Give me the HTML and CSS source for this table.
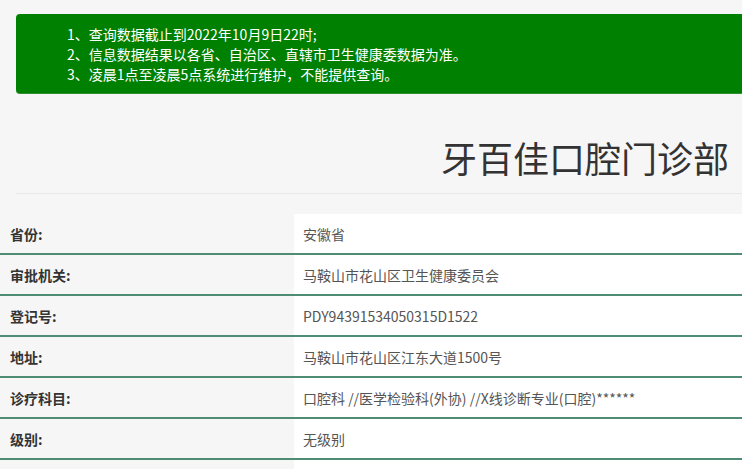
FILE: index.html
```html
<!DOCTYPE html>
<html lang="zh-CN">
<head>
<meta charset="utf-8">
<title>牙百佳口腔门诊部</title>
<link rel="stylesheet" href="styles.css">
</head>
<body>
<div class="top">
  <div class="notice">
    <p>1、查询数据截止到2022年10月9日22时;</p>
    <p>2、信息数据结果以各省、自治区、直辖市卫生健康委数据为准。</p>
    <p>3、凌晨1点至凌晨5点系统进行维护，不能提供查询。</p>
  </div>
  <h1 class="title">牙百佳口腔门诊部</h1>
</div>
<div class="info">
  <div class="row"><div class="label">省份:</div><div class="value">安徽省</div></div>
  <div class="row"><div class="label">审批机关:</div><div class="value">马鞍山市花山区卫生健康委员会</div></div>
  <div class="row"><div class="label">登记号:</div><div class="value">PDY94391534050315D1522</div></div>
  <div class="row"><div class="label">地址:</div><div class="value">马鞍山市花山区江东大道1500号</div></div>
  <div class="row"><div class="label">诊疗科目:</div><div class="value">口腔科 //医学检验科(外协) //X线诊断专业(口腔)******</div></div>
  <div class="row"><div class="label">级别:</div><div class="value">无级别</div></div>
  <div class="row"><div class="label"></div><div class="value"></div></div>
</div>
</body>
</html>
```

FILE: styles.css
```css
html {
  overflow: hidden;
}
body {
  margin: 0;
  background: #f6f6f6;
  font-family: "Noto Sans CJK SC", "Microsoft YaHei", sans-serif;
  color: #333;
}
.top {
  padding-left: 16px;
}
.notice {
  margin: 14px -10px 0 0;
  height: 80px;
  box-sizing: border-box;
  padding: 10px 0 10px 51px;
  background: #008000;
  border-radius: 4px;
  border-bottom: 1px solid #2f8f2f;
  color: #fff;
  font-size: 14px;
  line-height: 20px;
}
.notice p {
  margin: 0;
}
.title {
  margin: 43px 0 0;
  padding: 0 13px 16px 0;
  text-align: right;
  font-size: 36px;
  line-height: 40px;
  font-weight: 400;
  color: #333;
  border-bottom: 1px solid #e9e9e9;
}
.info {
  margin-top: 20px;
}
.row {
  display: grid;
  grid-template-columns: 294px 1fr;
  height: 41px;
  box-sizing: border-box;
  border-bottom: 2px solid #4f8c74;
  font-size: 14px;
}
.label {
  padding-left: 10px;
  font-weight: 700;
  color: #333;
  display: flex;
  align-items: center;
}
.value {
  background: #fff;
  padding-left: 9px;
  color: #555;
  display: flex;
  align-items: center;
}
```
